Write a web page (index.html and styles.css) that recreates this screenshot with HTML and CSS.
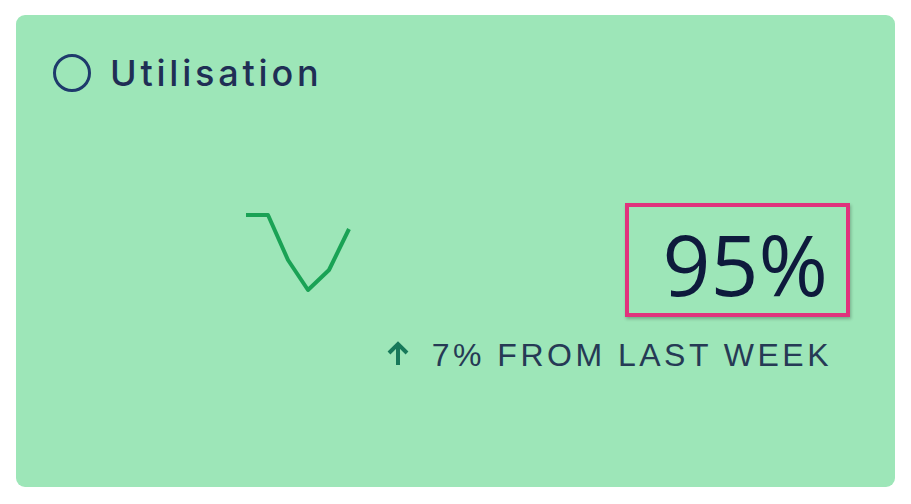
FILE: index.html
```html
<!DOCTYPE html>
<html lang="en">
<head>
    <meta charset="UTF-8">
    <title>Utilisation</title>
    <link rel="stylesheet" href="styles.css">
</head>
<body>
    <div class="card">
        <div class="card-head">
            <span class="ring"></span>
            <h2>Utilisation</h2>
        </div>
        <div class="card-body">
            <svg class="spark" width="110" height="84" viewBox="0 0 110 84">
                <polyline points="0,3 22,3 42,48 62,78 83,58 103,17" fill="none" stroke="#1aa255" stroke-width="4" stroke-linejoin="round"/>
            </svg>
            <div class="metric">
                <div class="value-box">95%</div>
                <div class="trend">
                    <svg class="arrow" width="24" height="26" viewBox="0 0 24 26">
                        <path d="M12 25V4M3 13l9-9 9 9" fill="none" stroke="#17795a" stroke-width="4"/>
                    </svg>
                    <span>7% FROM LAST WEEK</span>
                </div>
            </div>
        </div>
    </div>
</body>
</html>
```

FILE: styles.css
```css
body { margin: 0; background: #fff; font-family: "Open Sans", Arial, sans-serif; }
.card { margin: 15px 16px; height: 472px; box-sizing: border-box; background: #9de6b8; border-radius: 9px; padding: 38px 45px 0 37px; }
.card-head { display: flex; align-items: center; gap: 19px; }
.ring { width: 32px; height: 32px; border: 3px solid #1e3a6c; border-radius: 50%; }
.card-head h2 { margin: 0; font-family: Inter, sans-serif; font-weight: 500; font-size: 36px; color: #1f2e55; letter-spacing: 3.8px; line-height: 40px; }
.card-body { display: flex; justify-content: space-between; align-items: flex-start; margin-top: 110px; padding-left: 193px; }
.spark { margin-top: 9px; }
.metric { display: flex; flex-direction: column; align-items: flex-end; }
.value-box { width: 225px; height: 114px; box-sizing: border-box; border: 4px solid #e0337c; box-shadow: 1px 2px 3px rgba(0,0,0,0.25); text-align: right; padding-right: 18px; font-size: 84px; font-weight: 400; line-height: 114px; color: #0e1a3c; }
.trend { display: flex; align-items: center; gap: 22px; margin-top: 20px; margin-right: 18px; color: #263a55; font-family: "Liberation Sans", Arial, sans-serif; font-size: 32px; letter-spacing: 3.5px; }
.arrow { margin-top: -6px; }
```
